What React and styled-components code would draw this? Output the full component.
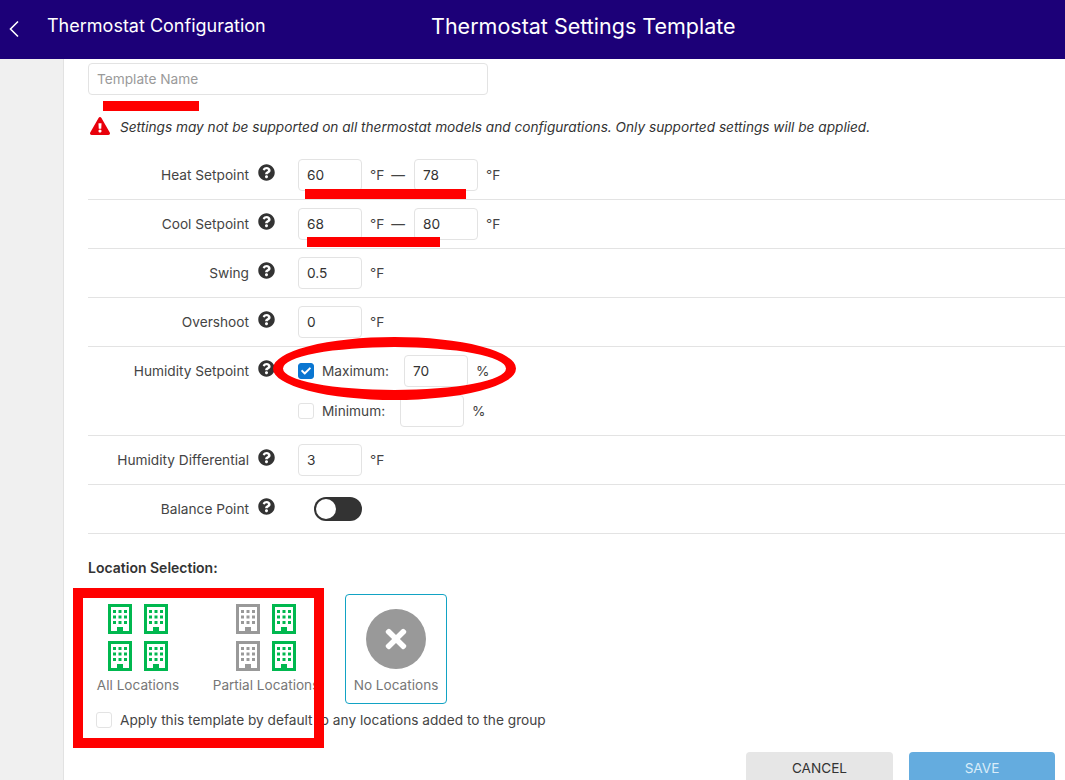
import styled, { createGlobalStyle } from "styled-components";
import { FaCheck, FaExclamationTriangle, FaQuestionCircle, FaTimes } from "react-icons/fa";

const GlobalStyle = createGlobalStyle`
  html, body {
    margin: 0;
    height: 100%;
    background: #fff;
    overflow: hidden;
  }
  * { box-sizing: border-box; }
`;

const Page = styled.div`
  position: relative;
  width: 1065px;
  height: 780px;
  overflow: hidden;
  font-family: Inter, "Liberation Sans", sans-serif;
  color: #333;
`;

const Header = styled.header`
  display: flex;
  align-items: center;
  height: 59px;
  background: #1c0078;
  color: #fff;
`;

const Back = styled.svg`
  width: 12px;
  height: 18px;
  margin: -1px 27px 0 8px;
  fill: none;
  stroke: #fff;
  stroke-width: 1.6;
`;

const Section = styled.div`
  width: 385px;
  font-size: 18px;
  margin-top: -8px;
`;

const Title = styled.h1`
  margin: -8px 0 0 -1px;
  font-size: 21.5px;
  font-weight: 400;
`;

const Body = styled.div`
  display: flex;
  height: 721px;
`;

const Sidebar = styled.aside`
  width: 64px;
  background: #f0f0f0;
  border-right: 1px solid #e2e2e2;
`;

const Content = styled.main`
  flex: 1;
  padding: 4px 0 0 24px;
`;

const TextInput = styled.div`
  display: flex;
  align-items: center;
  width: ${(p) => p.$width || 64}px;
  height: 32px;
  padding: 0 8px;
  border: 1px solid #e3e3e3;
  border-radius: 4px;
  background: #fff;
  font-size: 13.7px;
  color: ${(p) => (p.$placeholder ? "#9a9a9a" : "#333")};
`;

const Warning = styled.div`
  display: flex;
  align-items: center;
  gap: 10px;
  height: 20px;
  margin: 22px 0 14px 2px;
  font-size: 13.65px;
  font-style: italic;
  color: #333;

  svg {
    width: 20px;
    height: 20px;
    margin-top: -2px;
    color: #e8000b;
  }
`;

const Row = styled.div`
  display: grid;
  grid-template-columns: 161px 49px 1fr;
  padding: 8px 0;
  border-bottom: 1px solid #e3e3e3;
  &:last-of-type {
    padding-bottom: 12px;
  }
`;

const Label = styled.div`
  height: 32px;
  line-height: 32px;
  text-align: right;
  font-size: 13.7px;
  color: #444;
`;

const Help = styled.div`
  display: flex;
  justify-content: center;
  padding: 5px 15px 0 0;
  height: 32px;
  color: #333;
  font-size: 17px;
`;

const Fields = styled.div`
  display: flex;
  flex-direction: column;
  gap: 8px;
`;

const Line = styled.div`
  display: flex;
  align-items: center;
  height: 32px;
  font-size: 13.7px;
  color: #444;
`;

const Unit = styled.span`
  margin-left: 8px;
`;

const Dash = styled.span`
  margin: 0 9px 0 7px;
`;

const Check = styled.span`
  display: flex;
  align-items: center;
  justify-content: center;
  flex: none;
  width: 16px;
  height: 16px;
  border-radius: 3px;
  border: 1px solid ${(p) => (p.$on ? "#0a76d1" : "#e3e3e3")};
  background: ${(p) => (p.$on ? "#0a76d1" : "#fff")};
  color: #fff;
  font-size: 10px;
`;

const CheckLabel = styled.span`
  width: ${(p) => p.$width}px;
  margin-left: 8px;
`;

const Toggle = styled.div`
  width: 48px;
  height: 24px;
  margin: 4px 0 0 16px;
  padding: 2px;
  border-radius: 12px;
  background: #333;

  &::before {
    content: "";
    display: block;
    width: 20px;
    height: 20px;
    border-radius: 50%;
    background: #fff;
  }
`;

const SectionTitle = styled.h2`
  margin: 26px 0 18px;
  font-size: 14px;
  line-height: 16px;
  font-weight: 600;
  color: #333;
`;

const Tiles = styled.div`
  display: flex;
  gap: 26px;
  margin-left: -1px;
`;

const Tile = styled.div`
  display: flex;
  flex-direction: column;
  align-items: center;
  width: 102px;
  height: 110px;
  margin-left: ${(p) => (p.$selected ? 2 : 0)}px;
  padding-top: ${(p) => (p.$selected ? 14 : 9)}px;
  border: 1px solid ${(p) => (p.$selected ? "#12a3c4" : "transparent")};
  border-radius: 4px;
`;

const Buildings = styled.div`
  display: grid;
  grid-template-columns: 24px 24px;
  gap: 7px 12px;
`;

const TileLabel = styled.div`
  margin-top: ${(p) => p.$mt}px;
  font-size: 13.6px;
  line-height: 16px;
  color: #777;
  white-space: nowrap;
`;

const NoneCircle = styled.div`
  display: flex;
  align-items: center;
  justify-content: center;
  width: 60px;
  height: 60px;
  border-radius: 50%;
  background: #999;
  color: #fff;
  font-size: 30px;
`;

const ApplyRow = styled.div`
  display: flex;
  align-items: center;
  height: 16px;
  margin: 8px 0 0 8px;
  font-size: 13.7px;
  color: #444;
`;

const Actions = styled.div`
  display: flex;
  justify-content: flex-end;
  gap: 16px;
  margin-top: 24px;
  padding-right: 10px;
`;

const Button = styled.div`
  display: flex;
  align-items: center;
  justify-content: center;
  width: ${(p) => p.$width}px;
  height: 32px;
  border-radius: 4px 4px 0 0;
  font-size: 13.6px;
  background: ${(p) => (p.$primary ? "#64acdf" : "#e6e6e6")};
  color: ${(p) => (p.$primary ? "#d9ecf9" : "#333")};
`;

const RedBar = styled.div`
  position: absolute;
  left: ${(p) => p.$x}px;
  top: ${(p) => p.$y}px;
  width: ${(p) => p.$w}px;
  height: 10px;
  background: #ff0000;
`;

const RedEllipse = styled.div`
  position: absolute;
  left: 273px;
  top: 337px;
  width: 243px;
  height: 63px;
  border: 10px solid #ff0000;
  border-radius: 50%;
`;

const RedBox = styled.div`
  position: absolute;
  left: 73px;
  top: 588px;
  width: 251px;
  height: 160px;
  border: 10px solid #ff0000;
`;

function Building({ on }) {
  const color = on ? "#00b84f" : "#999999";
  const spots = [5, 10.5, 16];
  return (
    <svg width="24" height="30" viewBox="0 0 24 30">
      <rect x="1.5" y="1.5" width="21" height="27" fill="#fff" stroke={color} strokeWidth="3" />
      {spots.map((x) =>
        [6, 11.5, 17].map((y) => <rect key={`${x}-${y}`} x={x} y={y} width="3" height="3" fill={color} />),
      )}
      <rect x="9" y="23" width="6" height="7" fill={color} />
    </svg>
  );
}

function SettingRow({ label, children }) {
  return (
    <Row>
      <Label>{label}</Label>
      <Help>
        <FaQuestionCircle />
      </Help>
      <Fields>{children}</Fields>
    </Row>
  );
}

export default function App() {
  return (
    <Page>
      <GlobalStyle />
      <Header>
        <Back viewBox="0 0 12 18">
          <path d="M10 1.5 2.5 9l7.5 7.5" />
        </Back>
        <Section>Thermostat Configuration</Section>
        <Title>Thermostat Settings Template</Title>
      </Header>
      <Body>
        <Sidebar />
        <Content>
          <TextInput $width={400} $placeholder>
            Template Name
          </TextInput>
          <Warning>
            <FaExclamationTriangle />
            Settings may not be supported on all thermostat models and configurations. Only supported settings will be
            applied.
          </Warning>
          <SettingRow label="Heat Setpoint">
            <Line>
              <TextInput>60</TextInput>
              <Unit>°F</Unit>
              <Dash>—</Dash>
              <TextInput>78</TextInput>
              <Unit>°F</Unit>
            </Line>
          </SettingRow>
          <SettingRow label="Cool Setpoint">
            <Line>
              <TextInput>68</TextInput>
              <Unit>°F</Unit>
              <Dash>—</Dash>
              <TextInput>80</TextInput>
              <Unit>°F</Unit>
            </Line>
          </SettingRow>
          <SettingRow label="Swing">
            <Line>
              <TextInput>0.5</TextInput>
              <Unit>°F</Unit>
            </Line>
          </SettingRow>
          <SettingRow label="Overshoot">
            <Line>
              <TextInput>0</TextInput>
              <Unit>°F</Unit>
            </Line>
          </SettingRow>
          <SettingRow label="Humidity Setpoint">
            <Line>
              <Check $on>
                <FaCheck />
              </Check>
              <CheckLabel $width={82}>Maximum:</CheckLabel>
              <TextInput>70</TextInput>
              <Unit>%</Unit>
            </Line>
            <Line>
              <Check />
              <CheckLabel $width={78}>Minimum:</CheckLabel>
              <TextInput />
              <Unit>%</Unit>
            </Line>
          </SettingRow>
          <SettingRow label="Humidity Differential">
            <Line>
              <TextInput>3</TextInput>
              <Unit>°F</Unit>
            </Line>
          </SettingRow>
          <SettingRow label="Balance Point">
            <Toggle />
          </SettingRow>
          <SectionTitle>Location Selection:</SectionTitle>
          <Tiles>
            <Tile>
              <Buildings>
                <Building on />
                <Building on />
                <Building on />
                <Building on />
              </Buildings>
              <TileLabel $mt={6}>All Locations</TileLabel>
            </Tile>
            <Tile>
              <Buildings>
                <Building />
                <Building on />
                <Building />
                <Building on />
              </Buildings>
              <TileLabel $mt={6}>Partial Locations</TileLabel>
            </Tile>
            <Tile $selected>
              <NoneCircle>
                <FaTimes />
              </NoneCircle>
              <TileLabel $mt={8}>No Locations</TileLabel>
            </Tile>
          </Tiles>
          <ApplyRow>
            <Check />
            <CheckLabel>Apply this template by default to any locations added to the group</CheckLabel>
          </ApplyRow>
          <Actions>
            <Button $width={147}>CANCEL</Button>
            <Button $width={146} $primary>
              SAVE
            </Button>
          </Actions>
        </Content>
      </Body>
      <RedBar $x={103} $y={101} $w={96} />
      <RedBar $x={305} $y={189} $w={161} />
      <RedBar $x={307} $y={237} $w={133} />
      <RedEllipse />
      <RedBox />
    </Page>
  );
}
